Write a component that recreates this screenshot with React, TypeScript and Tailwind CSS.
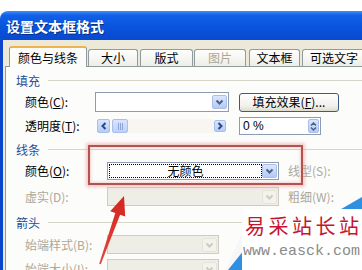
import type { ReactNode } from 'react';

function Chevron({ dir, color }: { dir: 'down' | 'left' | 'right'; color: string }) {
  const d =
    dir === 'down' ? 'M1.5 1.5 L4.5 4.5 L7.5 1.5' : dir === 'left' ? 'M4.5 1 L1.5 4 L4.5 7' : 'M1.5 1 L4.5 4 L1.5 7';
  const w = dir === 'down' ? 9 : 6;
  const h = dir === 'down' ? 6 : 8;
  return (
    <svg width={w} height={h} viewBox={`0 0 ${w} ${h}`}>
      <path d={d} fill="none" stroke={color} strokeWidth="2" />
    </svg>
  );
}

function DropBtn({ disabled }: { disabled?: boolean }) {
  return (
    <div
      className={`w-[15px] h-[14px] rounded-[2px] border flex items-center justify-center ${
        disabled ? 'border-[#e6e4da] bg-[#f3f2ec]' : 'border-[#a9bfea] bg-[linear-gradient(#dce7fe,#b4c9f6)]'
      }`}
    >
      <Chevron dir="down" color={disabled ? '#cdcbc0' : '#4d6185'} />
    </div>
  );
}

function Header({ children }: { children: ReactNode }) {
  return (
    <div className="h-[15px] flex items-center">
      <span className="text-[12px] leading-[15px] text-[#1c4f96]">{children}</span>
      <div className="flex-1 h-px bg-[#d6d5c9] ml-[8px]" />
    </div>
  );
}

function Label({ w, gray, children }: { w: string; gray?: boolean; children: ReactNode }) {
  return (
    <div className={`${w} shrink-0 text-[12px] leading-[14px] ${gray ? 'text-[#aca899]' : 'text-black'}`}>
      {children}
    </div>
  );
}

function DisabledCombo({ w }: { w: string }) {
  return (
    <div className={`${w} h-full border border-[#cfcdc1] bg-[#efeee6] flex items-center justify-end pr-[1px]`}>
      <DropBtn disabled />
    </div>
  );
}

export default function App() {
  const tabs = [
    { label: '大小', w: 'w-[50px]', ml: 'ml-[1px]' },
    { label: '版式', w: 'w-[53px]', ml: 'ml-[2px]' },
    { label: '图片', w: 'w-[52px]', ml: 'ml-[1px]', disabled: true },
    { label: '文本框', w: 'w-[51px]', ml: 'ml-[3px]' },
    { label: '可选文字', w: 'w-[64px]', ml: 'ml-[2px]' },
  ];

  return (
    <div className="w-[362px] h-[270px] overflow-hidden bg-white relative font-['Noto_Sans_CJK_SC','Noto_Sans',sans-serif]">
      <div className="pt-[11px]">
        {/* title bar */}
        <div className="h-[29px] rounded-tl-[8px] bg-[linear-gradient(180deg,#4390f8_0%,#1260e8_14%,#0a54dc_55%,#0849cf_100%)] flex items-center pl-[6px]">
          <span className="text-white font-bold text-[14px] leading-[16px] [text-shadow:1px_1px_0_#0a2f8a]">
            设置文本框格式
          </span>
        </div>

        <div className="flex">
          <div className="w-[3px] shrink-0 bg-[#0b45cc]" />
          <div className="flex-1 bg-[#ece9d8] pt-[6px] pl-[2px] h-[240px]">
            {/* tabs */}
            <div className="flex items-end pl-[4px] h-[20px] overflow-visible whitespace-nowrap">
              <div className="relative z-10 w-[78px] h-[21px] -mb-px border-x border-t-2 border-x-[#919b9c] border-t-[#f0b24b] rounded-t-[3px] bg-[#fcfcfb] flex items-center justify-center text-[12px] text-black">
                颜色与线条
              </div>
              {tabs.map((t) => (
                <div
                  key={t.label}
                  className={`${t.w} ${t.ml} shrink-0 h-[17px] border-x border-t border-[#919b9c] rounded-t-[3px] bg-[linear-gradient(#fefefe,#eeede6)] flex items-center justify-center text-[12px] leading-[14px] ${
                    t.disabled ? 'text-[#aca899]' : 'text-black'
                  }`}
                >
                  {t.label}
                </div>
              ))}
            </div>

            {/* panel */}
            <div className="border-t border-l border-[#919b9c] bg-[#fcfcfb] h-[220px] pt-[6px] pl-[10px]">
              <Header>填充</Header>

              <div className="mt-[4px] h-[20px] flex items-center pl-[9px]">
                <Label w="w-[70px]">
                  颜色(<u>C</u>):
                </Label>
                <div className="w-[134px] h-full border border-[#8e9cb3] bg-white flex items-center justify-end pr-[1px]">
                  <DropBtn />
                </div>
                <div className="ml-[10px] w-[100px] h-[19px] rounded-[3px] border border-[#3c5a86] bg-[linear-gradient(#ffffff,#f1f0ea_70%,#dedbcf)] flex items-center justify-center text-[12px] text-black">
                  填充效果(<u>F</u>)...
                </div>
              </div>

              <div className="mt-[5px] h-[18px] flex items-center pl-[9px]">
                <Label w="w-[72px]">
                  透明度(<u>T</u>):
                </Label>
                <div className="w-[131px] h-[14px] flex items-center">
                  <div className="w-[13px] h-[14px] rounded-[2px] border border-[#a9bfea] bg-[linear-gradient(#d9e5fe,#b8cbf6)] flex items-center justify-center">
                    <Chevron dir="left" color="#2a4a8a" />
                  </div>
                  <div className="ml-[2px] w-[16px] h-[14px] rounded-[2px] border border-[#a9bfea] bg-[linear-gradient(#d9e5fe,#c0d1f8)] flex items-center justify-center gap-[1px]">
                    <div className="w-px h-[7px] bg-[#8aa4dc]" />
                    <div className="w-px h-[7px] bg-[#8aa4dc]" />
                    <div className="w-px h-[7px] bg-[#8aa4dc]" />
                  </div>
                  <div className="flex-1 h-full bg-[#f7f6f1]" />
                  <div className="w-[12px] h-[12px] rounded-[2px] border border-[#a9bfea] bg-[linear-gradient(#d9e5fe,#b8cbf6)] flex items-center justify-center mr-[2px]">
                    <Chevron dir="right" color="#2a4a8a" />
                  </div>
                </div>
                <div className="ml-[11px] w-[82px] h-full border border-[#8e9cb3] bg-white flex items-center justify-between pl-[3px] pr-[1px]">
                  <span className="text-[12px] leading-[14px] font-['Liberation_Sans',sans-serif]">0 %</span>
                  <div className="w-[11px] h-[14px] rounded-[2px] border border-[#a9bfea] bg-[linear-gradient(#d9e5fe,#b8cbf6)] flex flex-col items-center justify-center gap-[1px]">
                    <svg width="7" height="4" viewBox="0 0 7 4">
                      <path d="M1 3.5 L3.5 1 L6 3.5" fill="none" stroke="#4d6185" strokeWidth="1.5" />
                    </svg>
                    <svg width="7" height="4" viewBox="0 0 7 4">
                      <path d="M1 0.5 L3.5 3 L6 0.5" fill="none" stroke="#4d6185" strokeWidth="1.5" />
                    </svg>
                  </div>
                </div>
              </div>

              <div className="mt-[7px]">
                <Header>线条</Header>
              </div>

              <div className="mt-[5px] h-[18px] flex items-center pl-[9px]">
                <Label w="w-[82px]">
                  颜色(<u>O</u>):
                </Label>
                <div className="w-[172px] h-full border border-[#8e9cb3] bg-white flex items-center p-[1px]">
                  <div className="flex-1 h-full border border-dotted border-black flex items-center justify-center text-[12px] leading-[14px] text-black">
                    无颜色
                  </div>
                  <DropBtn />
                </div>
                <div className="ml-[9px] text-[12px] leading-[14px] text-[#aca899]">线型(S):</div>
              </div>

              <div className="mt-[7px] h-[19px] flex items-center pl-[9px]">
                <Label w="w-[82px]" gray>
                  虚实(D):
                </Label>
                <DisabledCombo w="w-[172px]" />
                <div className="ml-[9px] text-[12px] leading-[14px] text-[#aca899]">粗细(W):</div>
              </div>

              <div className="mt-[9px]">
                <Header>箭头</Header>
              </div>

              <div className="mt-[5px] h-[19px] flex items-center pl-[9px]">
                <Label w="w-[82px]" gray>
                  始端样式(B):
                </Label>
                <DisabledCombo w="w-[112px]" />
              </div>

              <div className="mt-[5px] h-[19px] flex items-center pl-[9px]">
                <Label w="w-[82px]" gray>
                  始端大小(I):
                </Label>
                <DisabledCombo w="w-[112px]" />
              </div>
            </div>
          </div>
        </div>
      </div>

      {/* red annotation box */}
      <div className="absolute left-[88px] top-[145px] w-[215px] h-[40px] border-2 border-[#b4524e] shadow-[0_0_3px_2px_rgba(235,160,160,0.55),inset_0_0_3px_1px_rgba(235,160,160,0.45)]" />

      {/* red arrow */}
      <svg className="absolute left-0 top-0" width="362" height="270" viewBox="0 0 362 270">
        <defs>
          <linearGradient id="ar" x1="0" y1="1" x2="0.3" y2="0">
            <stop offset="0" stopColor="#e14a3f" />
            <stop offset="1" stopColor="#d42a22" />
          </linearGradient>
        </defs>
        <polygon
          points="124,196 125.2,216.6 120.1,214.7 100.8,264.3 99.2,263.7 115.3,213.1 110.2,211.2"
          fill="url(#ar)"
        />
      </svg>

      {/* watermark */}
      <svg className="absolute left-0 top-0" width="362" height="270" viewBox="0 0 362 270">
        <polygon points="226,270 244,228 244,270" fill="#f4f6f8" fillOpacity="0.85" />
        <polygon points="228,270 244,250 244,270" fill="#2f8fe0" />
        <polygon points="336,212 362,197 362,212" fill="#2f8fe0" />
      </svg>
      <div className="absolute left-[242px] top-[209px] w-[120px] h-[61px] bg-white pl-[3px] pt-[6px]">
        <div className="text-[20px] leading-[22px] tracking-[3.5px] text-[#c8142c] font-['Noto_Sans_CJK_SC',sans-serif] whitespace-nowrap">
          易采站长站
        </div>
        <div className="mt-[7px] -ml-[2px] text-[15px] leading-[16px] text-[#8a8a8a] font-['Liberation_Mono',monospace] whitespace-nowrap">
          www.easck.com
        </div>
      </div>
    </div>
  );
}
